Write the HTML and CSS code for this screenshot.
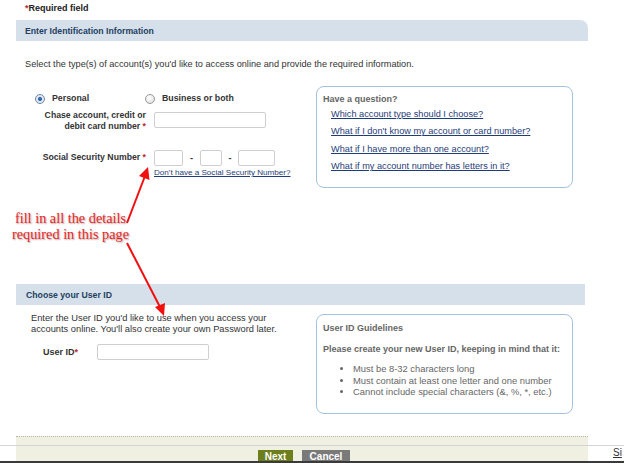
FILE: index.html
```html
<!DOCTYPE html>
<html>
<head>
<meta charset="utf-8">
<link rel="stylesheet" href="styles.css">
</head>
<body>
<div class="req"><span class="star">*</span>Required field</div>
<div class="wrap">
  <section class="sec1">
    <div class="bar">Enter Identification Information</div>
    <p class="intro">Select the type(s) of account(s) you'd like to access online and provide the required information.</p>
    <div class="row1">
      <div class="form1">
        <div class="radios">
          <label class="radio radio-personal"><span class="dot on"></span>Personal</label>
          <label class="radio"><span class="dot"></span>Business or both</label>
        </div>
        <div class="field card">
          <div class="lbl">Chase account, credit or<br>debit card number <span class="star">*</span></div>
          <span class="inp inp-card"></span>
        </div>
        <div class="field ssn">
          <div class="lbl lbl-ssn">Social Security Number <span class="star">*</span></div>
          <div class="ssn-col">
            <div class="ssn-inputs">
              <span class="inp s1"></span><span class="dash">-</span><span class="inp s2"></span><span class="dash">-</span><span class="inp s3"></span>
            </div>
            <a class="link ssn-link" href="#">Don't have a Social Security Number?</a>
          </div>
        </div>
      </div>
      <aside class="box qbox">
        <div class="box-title">Have a question?</div>
        <ul class="qlinks">
          <li><a class="link" href="#">Which account type should I choose?</a></li>
          <li><a class="link" href="#">What if I don't know my account or card number?</a></li>
          <li><a class="link" href="#">What if I have more than one account?</a></li>
          <li><a class="link" href="#">What if my account number has letters in it?</a></li>
        </ul>
      </aside>
    </div>
  </section>
  <section class="sec2">
    <div class="bar bar2">Choose your User ID</div>
    <div class="row2">
      <div class="form2">
        <p class="uid-text">Enter the User ID you'd like to use when you access your<br>accounts online. You'll also create your own Password later.</p>
        <div class="uid-row">
          <div class="uid-lbl">User ID<span class="star">*</span></div>
          <span class="inp inp-uid"></span>
        </div>
      </div>
      <aside class="box gbox">
        <div class="box-title">User ID Guidelines</div>
        <div class="box-title g2">Please create your new User ID, keeping in mind that it:</div>
        <ul class="glist">
          <li>Must be 8-32 characters long</li>
          <li>Must contain at least one letter and one number</li>
          <li>Cannot include special characters (&amp;, %, *, etc.)</li>
        </ul>
      </aside>
    </div>
  </section>
  <div class="foot-top"></div>
</div>
<div class="footrow">
  <div class="fspace"></div>
  <div class="fmid">
    <span class="btn next">Next</span>
    <span class="btn cancel">Cancel</span>
  </div>
  <div class="fside"><a class="si" href="#">Si</a></div>
</div>

<div class="note">fill in all the details<br>required in this page</div>
<svg class="arrows" width="624" height="463" viewBox="0 0 624 463">
  <line x1="127" y1="223" x2="145" y2="176" stroke="#f01010" stroke-width="2"/>
  <polygon points="148,167 149.5,180 139,176" fill="#f01010"/>
  <line x1="127" y1="243" x2="160" y2="307" stroke="#f01010" stroke-width="2"/>
  <polygon points="164,316 155,307 165,303" fill="#f01010"/>
</svg>
</body>
</html>
```
FILE: styles.css
```css
html, body {
  margin: 0;
  padding: 0;
}
body {
  width: 624px;
  height: 463px;
  overflow: hidden;
  position: relative;
  background: #fff;
  font-family: "Liberation Sans", Arial, sans-serif;
  font-size: 9.2px;
  color: #333;
}
.star {
  color: #b52a2a;
  font-weight: bold;
}
.req {
  height: 20px;
  box-sizing: border-box;
  padding: 3px 0 0 25px;
  font-weight: bold;
  font-size: 9px;
  line-height: 11px;
  color: #222;
}
.wrap {
  margin-left: 16px;
  width: 572px;
}
.bar {
  height: 21px;
  background: #d6e0eb;
  border-top-right-radius: 8px;
  padding-left: 9px;
  display: flex;
  align-items: center;
  font-weight: bold;
  font-size: 8.7px;
  color: #23415f;
}
.bar2 {
  border-radius: 0;
  width: 559px;
  padding-left: 10px;
}
.intro {
  margin: 17px 0 16px 9px;
  line-height: 12px;
  font-size: 9.2px;
}
.row1 {
  display: flex;
  height: 102px;
}
.form1 {
  width: 300px;
  flex: none;
}
.radios {
  display: flex;
  padding: 7px 0 0 19px;
  height: 11px;
  line-height: 11px;
  font-weight: bold;
  font-size: 8.8px;
}
.radio {
  display: flex;
  align-items: center;
  gap: 7px;
}
.radio-personal {
  width: 110px;
}
.dot {
  width: 10px;
  height: 10px;
  border-radius: 50%;
  border: 1px solid #9a9a9a;
  background: radial-gradient(circle at 40% 35%, #fff 0, #e6e6e6 70%, #d0d0d0 100%);
  box-sizing: border-box;
  position: relative;
  flex: none;
}
.dot.on {
  border-color: #6b86a8;
  background: radial-gradient(circle, #2a5f9e 0, #3c70b0 30%, #dbe5f0 42%, #eef2f7 100%);
}
.field {
  display: flex;
  align-items: flex-start;
}
.lbl {
  width: 138px;
  flex: none;
  box-sizing: border-box;
  text-align: right;
  padding-right: 8px;
  font-weight: bold;
  font-size: 8.7px;
  line-height: 11px;
}
.card {
  margin-top: 6px;
}
.inp {
  display: block;
  box-sizing: border-box;
  height: 16px;
  border: 1px solid #cfcfcf;
  border-radius: 2px;
  background: #fff;
  flex: none;
}
.inp-card {
  width: 112px;
  margin-top: 2px;
}
.ssn {
  margin-top: 18px;
}
.lbl-ssn {
  line-height: 16px;
  margin-top: -1px;
}
.ssn-inputs {
  display: flex;
  align-items: center;
}
.s1 { width: 29px; }
.s2 { width: 22px; }
.s3 { width: 37px; }
.dash {
  font-weight: bold;
  width: 17px;
  text-align: center;
}
.ssn-inputs .dash + .s2 + .dash {
  width: 16px;
}
.link {
  color: #1f3c78;
  text-decoration: underline;
}
.ssn-link {
  display: block;
  margin-top: 1px;
  line-height: 11px;
  font-size: 8.1px;
}
.box {
  box-sizing: border-box;
  width: 257px;
  border: 1.5px solid #a3c2de;
  border-radius: 8px;
  background: #fff;
  flex: none;
}
.qbox {
  height: 102px;
  padding: 6px 0 0 6px;
}
.box-title {
  font-weight: bold;
  color: #666;
  line-height: 12px;
  font-size: 9px;
}
.qlinks {
  list-style: none;
  margin: 0;
  padding: 0 0 0 8px;
}
.qlinks li {
  line-height: 17.4px;
}
.qlinks li:first-child {
  margin-top: 1px;
}
.sec2 {
  margin-top: 96px;
}
.row2 {
  display: flex;
  margin-top: 8px;
}
.form2 {
  width: 300px;
  flex: none;
}
.uid-text {
  margin: 0 0 0 15px;
  line-height: 11px;
  font-size: 9.3px;
}
.uid-row {
  display: flex;
  align-items: center;
  margin-top: 9px;
}
.uid-lbl {
  width: 81px;
  box-sizing: border-box;
  padding-left: 27px;
  font-weight: bold;
  font-size: 9px;
}
.inp-uid {
  width: 112px;
}
.gbox {
  height: 100px;
  margin-top: 1px;
  padding: 7px 0 0 6px;
}
.g2 {
  margin-top: 9px;
}
.glist {
  margin: 8px 0 0 0;
  padding: 0 0 0 30px;
  color: #666;
  line-height: 11.5px;
  font-size: 9.4px;
}
.glist li::marker {
  color: #666;
}
.foot-top {
  margin-top: 22px;
  height: 8px;
  border-top: 1px dotted #b9b9a4;
  background: #f0f0e2;
}
.footrow {
  display: flex;
  height: 15px;
  border-top: 1px solid #d4d4d4;
  border-bottom: 2px solid #3a3a3a;
}
.fspace {
  width: 16px;
  flex: none;
}
.fmid {
  width: 572px;
  flex: none;
  background: #f0f0e2;
  display: flex;
  justify-content: center;
  align-items: flex-end;
  gap: 9px;
  padding-left: 4px;
  box-sizing: border-box;
}
.btn {
  display: block;
  height: 11px;
  line-height: 13px;
  color: #fff;
  font-weight: bold;
  font-size: 10px;
  padding: 0 6px;
  overflow: hidden;
}
.next {
  background: #6d7f1c;
  width: 35px;
  box-sizing: border-box;
  text-align: center;
}
.cancel {
  background: #7a7a7a;
  width: 48px;
  box-sizing: border-box;
  text-align: center;
}
.fside {
  flex: 1;
  padding-left: 25px;
}
.si {
  color: #333;
  font-size: 10px;
  line-height: 14px;
  text-decoration: underline;
}
.note {
  position: absolute;
  left: 0;
  top: 210px;
  width: 141px;
  text-align: center;
  font-family: "Liberation Serif", "Times New Roman", serif;
  font-size: 14.3px;
  line-height: 16px;
  color: #ee2222;
  text-shadow: 1px 1px 1.5px rgba(0,0,0,0.35);
}
.arrows {
  position: absolute;
  left: 0;
  top: 0;
  pointer-events: none;
}
```
